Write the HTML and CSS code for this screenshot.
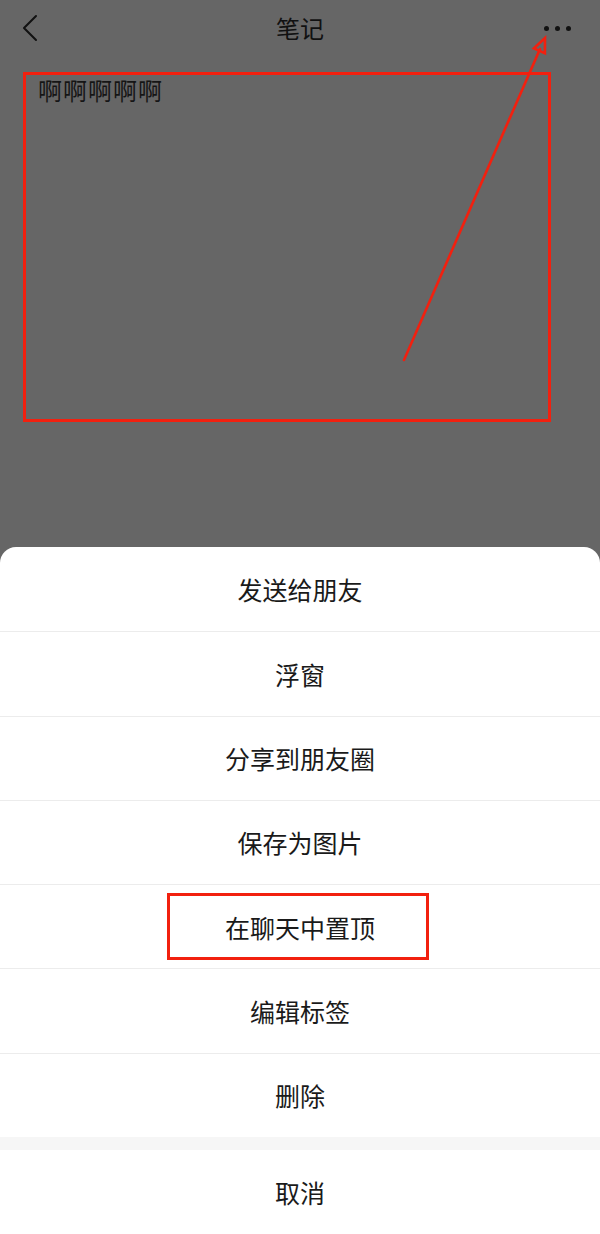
FILE: index.html
```html
<!DOCTYPE html>
<html lang="zh">
<head>
<meta charset="utf-8">
<title>笔记</title>
<link rel="stylesheet" href="styles.css">
</head>
<body>
<div class="page">
  <div class="backdrop">
    <header class="topbar">
      <svg class="back" width="16" height="28" viewBox="0 0 16 28"><path d="M14 2 L2 14 L14 26" fill="none" stroke="#111" stroke-width="2" stroke-linecap="round" stroke-linejoin="round"/></svg>
      <div class="title">笔记</div>
      <div class="more"><span class="dot"></span><span class="dot"></span><span class="dot"></span></div>
    </header>
    <div class="note">啊啊啊啊啊</div>
  </div>
  <div class="sheet">
    <ul class="menu">
      <li class="item">发送给朋友</li>
      <li class="item">浮窗</li>
      <li class="item">分享到朋友圈</li>
      <li class="item">保存为图片</li>
      <li class="item">在聊天中置顶</li>
      <li class="item">编辑标签</li>
      <li class="item">删除</li>
    </ul>
    <div class="gap"></div>
    <div class="cancel">取消</div>
  </div>
  <svg class="marks" width="600" height="1234" viewBox="0 0 600 1234">
    <rect x="24.5" y="73.5" width="525" height="347" fill="none" stroke="#f2200f" stroke-width="3"/>
    <line x1="404" y1="360" x2="540" y2="49" stroke="#f2200f" stroke-width="2.6" stroke-linecap="round"/>
    <polygon points="545,38 544.9,53.2 533.9,48.4" fill="none" stroke="#f2200f" stroke-width="2.6" stroke-linejoin="miter"/>
    <rect x="168.5" y="894.5" width="259" height="64" fill="none" stroke="#f2200f" stroke-width="3"/>
  </svg>
</div>
</body>
</html>
```

FILE: styles.css
```css
* { box-sizing: border-box; }
html, body { margin: 0; padding: 0; }
body {
  width: 600px;
  height: 1234px;
  overflow: hidden;
  font-family: "Noto Sans CJK SC", "Noto Sans", sans-serif;
  background: #666666;
}
.page {
  position: relative;
  width: 600px;
  height: 1234px;
  display: flex;
  flex-direction: column;
}
.backdrop {
  flex: 1;
  background: #666666;
}
.topbar {
  height: 56px;
  display: flex;
  align-items: center;
  justify-content: space-between;
  padding: 0 22px 0 22px;
  position: relative;
}
.back { display: block; }
.title {
  position: absolute;
  left: 0;
  right: 0;
  text-align: center;
  font-size: 24px;
  line-height: 56px;
  color: #111;
  pointer-events: none;
}
.more {
  display: flex;
  gap: 6px;
  align-items: center;
  padding-right: 7px;
}
.dot {
  width: 5px;
  height: 5px;
  border-radius: 50%;
  background: #111;
}
.note {
  padding: 17px 0 0 38px;
  font-size: 24px;
  line-height: 34px;
  color: #151515;
  letter-spacing: 1px;
}
.sheet {
  background: #ffffff;
  border-radius: 16px 16px 0 0;
  overflow: hidden;
}
.menu {
  list-style: none;
  margin: 0;
  padding: 0;
}
.item, .cancel {
  height: 84.3px;
  display: flex;
  align-items: center;
  justify-content: center;
  font-size: 25px;
  color: #1a1a1a;
}
.item + .item {
  border-top: 1px solid #ececec;
}
.gap {
  height: 13px;
  background: #f6f6f6;
}
.cancel {
  height: 84px;
}
.marks {
  position: absolute;
  left: 0;
  top: 0;
  pointer-events: none;
}
```
